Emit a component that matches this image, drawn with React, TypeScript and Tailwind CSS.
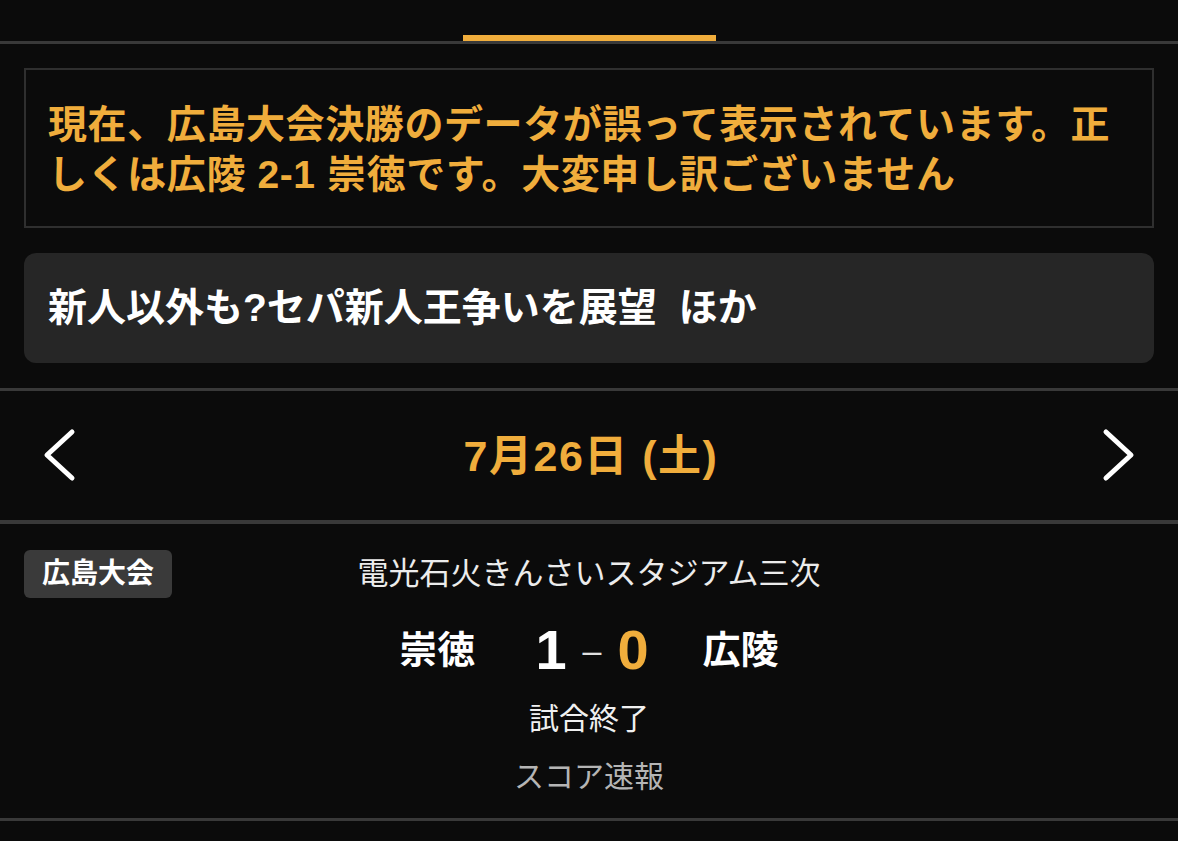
import React from "react";

const font = { fontFamily: '"Liberation Sans", "Noto Sans CJK JP", sans-serif' };

const Chevron = ({ dir }: { dir: "left" | "right" }) => (
  <svg width="38" height="56" viewBox="0 0 38 56" fill="none">
    <polyline
      points={dir === "left" ? "32,4 7,27 32,50" : "6,4 31,27 6,50"}
      stroke="#ffffff"
      strokeWidth="5"
      strokeLinecap="round"
      strokeLinejoin="round"
    />
  </svg>
);

const App = () => {
  return (
    <div
      className="w-[1178px] h-[841px] bg-[#0b0b0b] text-white overflow-hidden"
      style={font}
    >
      {/* tab bar */}
      <div className="h-[35px]" />
      <div className="flex justify-center">
        <div className="w-[253px] h-[6px] bg-[#f0ad3c]" />
      </div>
      <div className="h-[3px] bg-[#393939]" />

      {/* notice */}
      <div className="mx-[24px] mt-[24px] border-2 border-[#2f2f2f] pt-[30px] pb-[26px] px-[22px]">
        <p className="text-[39px] leading-[50px] font-bold tracking-[0.6px] text-[#f0ad3c]">
          現在、広島大会決勝のデータが誤って表示されています。正しくは広陵 2-1 崇徳です。大変申し訳ございません
        </p>
      </div>

      {/* headline card */}
      <div className="mx-[24px] mt-[25px] h-[110px] rounded-[12px] bg-[#262626] flex items-center px-[24px]">
        <span className="text-[39px] font-bold text-white">新人以外も?セパ新人王争いを展望</span>
        <span className="ml-[22px] text-[39px] font-bold text-white">ほか</span>
      </div>

      <div className="mt-[25px] h-[3px] bg-[#393939]" />

      {/* date nav */}
      <div className="h-[129px] flex items-center justify-between px-[40px]">
        <Chevron dir="left" />
        <span className="text-[43px] font-bold tracking-[1.5px] text-[#f0ad3c] pt-[2px] pl-[4px]">
          7月26日 (土)
        </span>
        <Chevron dir="right" />
      </div>

      <div className="h-[4px] bg-[#393939]" />

      {/* game */}
      <div className="pt-[26px] pb-[22px]">
        <div className="grid grid-cols-[1fr_auto_1fr] items-center px-[24px]">
          <div>
            <span className="inline-flex h-[48px] items-center rounded-[6px] bg-[#3a3a3a] px-[18px] text-[28px] font-bold">
              広島大会
            </span>
          </div>
          <span className="text-[31px] text-[#ececec]">電光石火きんさいスタジアム三次</span>
          <div />
        </div>

        <div className="mt-[24px] h-[56px] flex items-center justify-center">
          <span className="text-[38px] font-bold">崇徳</span>
          <div className="flex items-center ml-[60px] mr-[54px] font-bold">
            <span className="text-[56px] leading-none">1</span>
            <span className="text-[34px] leading-none mx-[16px] text-[#e0e0e0] font-normal">–</span>
            <span className="text-[56px] leading-none text-[#f0ad3c]">0</span>
          </div>
          <span className="text-[38px] font-bold">広陵</span>
        </div>

        <div className="mt-[20px] h-[40px] flex items-center justify-center text-[30px] text-[#f0f0f0]">
          試合終了
        </div>
        <div className="mt-[18px] h-[40px] flex items-center justify-center text-[30px] text-[#b5b5b5]">
          スコア速報
        </div>
      </div>

      <div className="h-[3px] bg-[#393939]" />
    </div>
  );
};

export default App;
